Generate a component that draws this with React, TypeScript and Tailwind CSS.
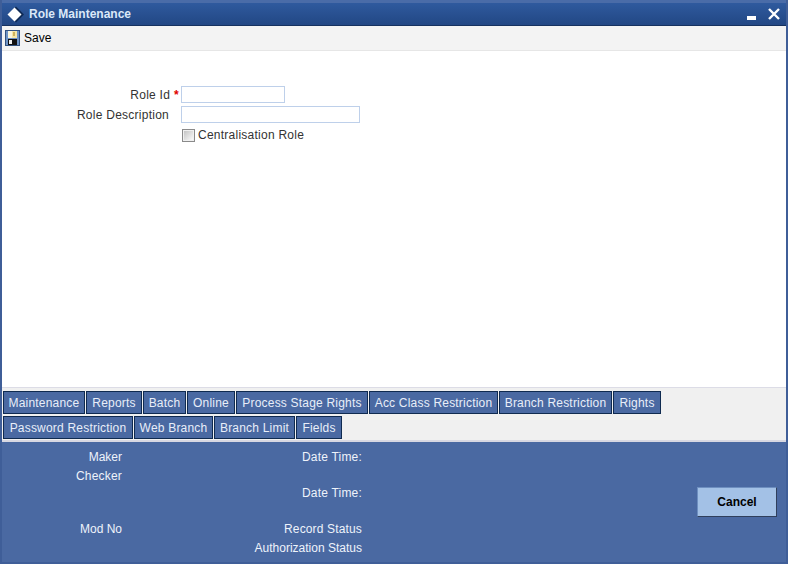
import React from 'react';

const TABS_ROW_1 = [
  { label: 'Maintenance', width: 'w-[82px]' },
  { label: 'Reports', width: 'w-[56px]' },
  { label: 'Batch', width: 'w-[43px]' },
  { label: 'Online', width: 'w-[48px]' },
  { label: 'Process Stage Rights', width: 'w-[132px]' },
  { label: 'Acc Class Restriction', width: 'w-[129px]' },
  { label: 'Branch Restriction', width: 'w-[113px]' },
  { label: 'Rights', width: 'w-[48px]' },
];
const TABS_ROW_2 = [
  { label: 'Password Restriction', width: 'w-[130px]' },
  { label: 'Web Branch', width: 'w-[79px]' },
  { label: 'Branch Limit', width: 'w-[81px]' },
  { label: 'Fields', width: 'w-[46px]' },
];

function TabButton({ label, width }: { label: string; width: string }) {
  return (
    <button className={`h-[23px] ${width} bg-[#4a69a2] border border-[#0f2a50] text-[12px] leading-[22px] tracking-[0.2px] text-[#e8eef9] whitespace-nowrap`}>
      {label}
    </button>
  );
}

function SaveIcon() {
  return (
    <svg width="15" height="16" viewBox="0 0 15 16" className="shrink-0">
      <rect x="0.5" y="0.5" width="14" height="15" fill="#6f94c6" stroke="#33527f" />
      <rect x="3" y="1" width="9" height="7" fill="#f6e7a6" />
      <rect x="3" y="1" width="4" height="7" fill="#fbf6dc" />
      <rect x="8" y="2" width="2" height="4" fill="#cfb25a" />
      <rect x="3" y="9" width="9" height="6" fill="#111" />
      <rect x="4" y="10" width="3" height="4" fill="#eee" />
    </svg>
  );
}

function FooterLine({ label, className = '' }: { label?: string; className?: string }) {
  return <div className={`h-[18px] leading-[18px] whitespace-nowrap ${className}`}>{label}</div>;
}

export default function App() {
  return (
    <div className="w-[788px] h-[564px] flex flex-col overflow-hidden bg-white border-x-2 border-b-2 border-[#3f5e98] font-['Liberation_Sans',_Arial,_sans-serif] text-[12px] text-[#333]">
      {/* Title bar */}
      <div className="h-[26px] -mx-[2px] shrink-0 flex items-center justify-between pl-[7px] pr-[8px] border-t-[3px] border-[#4a6ca8] border-b border-b-[#16315f] bg-gradient-to-b from-[#2f5a9e] to-[#224784]">
        <div className="flex items-center gap-[5px]">
          <svg width="17" height="17" viewBox="0 0 17 17">
            <path d="M9 0.5 17 8.5 9 16.5 1 8.5Z" fill="#0f2a55" />
            <path d="M7.5 1.5 14.5 8.5 7.5 15.5 0.5 8.5Z" fill="#fff" />
          </svg>
          <span className="font-bold text-[#dbe8f8] leading-none">Role Maintenance</span>
        </div>
        <div className="flex items-center gap-[12px]">
          <span className="block w-[9px] h-[4px] bg-white mt-[8px]" />
          <svg width="12" height="12" viewBox="0 0 12 12">
            <path d="M1 1 11 11M11 1 1 11" stroke="#fff" strokeWidth="2.4" />
          </svg>
        </div>
      </div>

      {/* Toolbar */}
      <div className="h-[25px] shrink-0 flex items-center gap-[4px] pl-[3px] bg-[#f3f3f3] border-b border-[#e6e6e6] text-black">
        <SaveIcon />
        <span>Save</span>
      </div>

      {/* Form */}
      <div className="flex-1 pt-[33px] tracking-[0.25px]">
        <div className="flex items-center h-[20px] mt-[1px]">
          <div className="w-[177px] flex justify-end gap-[4px]">
            <span>Role Id</span>
            <span className="text-[#e00000] font-bold">*</span>
          </div>
          <input className="ml-[2px] mb-[2px] w-[104px] h-[17px] border border-[#bed0ea] bg-white" />
        </div>
        <div className="flex items-center h-[20px]">
          <div className="w-[167px] text-right">Role Description</div>
          <input className="ml-[12px] mb-[2px] w-[179px] h-[17px] border border-[#bed0ea] bg-white" />
        </div>
        <div className="flex items-center h-[20px] pl-[180px]">
          <span className="block w-[13px] h-[13px] border border-[#8a8a8a] bg-[#f0f0f0] p-[1px]">
            <span className="block w-full h-full bg-gradient-to-br from-[#c4c4c4] to-[#fafafa]" />
          </span>
          <span className="ml-[3px]">Centralisation Role</span>
        </div>
      </div>

      {/* Tabs */}
      <div className="h-[55px] shrink-0 flex flex-col gap-[2px] pt-[3px] pl-[1px] bg-[#f0f0f0] border-t border-[#dcdce6] border-b-2 border-b-[#d8d8e2]">
        <div className="flex gap-[1px]">
          {TABS_ROW_1.map((t) => <TabButton key={t.label} label={t.label} width={t.width} />)}
        </div>
        <div className="flex gap-[1px]">
          {TABS_ROW_2.map((t) => <TabButton key={t.label} label={t.label} width={t.width} />)}
        </div>
      </div>

      {/* Footer */}
      <div className="h-[120px] shrink-0 flex bg-[#4a69a2] text-[#eef3fb] pt-[6px]">
        <div className="w-[120px] text-right">
          <FooterLine label="Maker" />
          <FooterLine label="Checker" className="mt-[1px] tracking-[0.2px]" />
          <FooterLine />
          <FooterLine className="-mt-[1px]" />
          <FooterLine label="Mod No" />
        </div>
        <div className="w-[240px] text-right">
          <FooterLine label="Date Time:" className="tracking-[0.2px]" />
          <FooterLine />
          <FooterLine label="Date Time:" className="tracking-[0.2px]" />
          <FooterLine />
          <FooterLine label="Record Status" className="tracking-[0.15px]" />
          <FooterLine label="Authorization Status" className="mt-[1px]" />
        </div>
        <div className="flex-1 flex justify-end pr-[9px] pt-[39px]">
          <button className="w-[80px] h-[30px] bg-[#a3c1e6] border border-t-[#6e8fc0] border-l-[#6e8fc0] border-r-[#2f3f5c] border-b-[#2f3f5c] font-bold text-black">
            Cancel
          </button>
        </div>
      </div>
    </div>
  );
}
